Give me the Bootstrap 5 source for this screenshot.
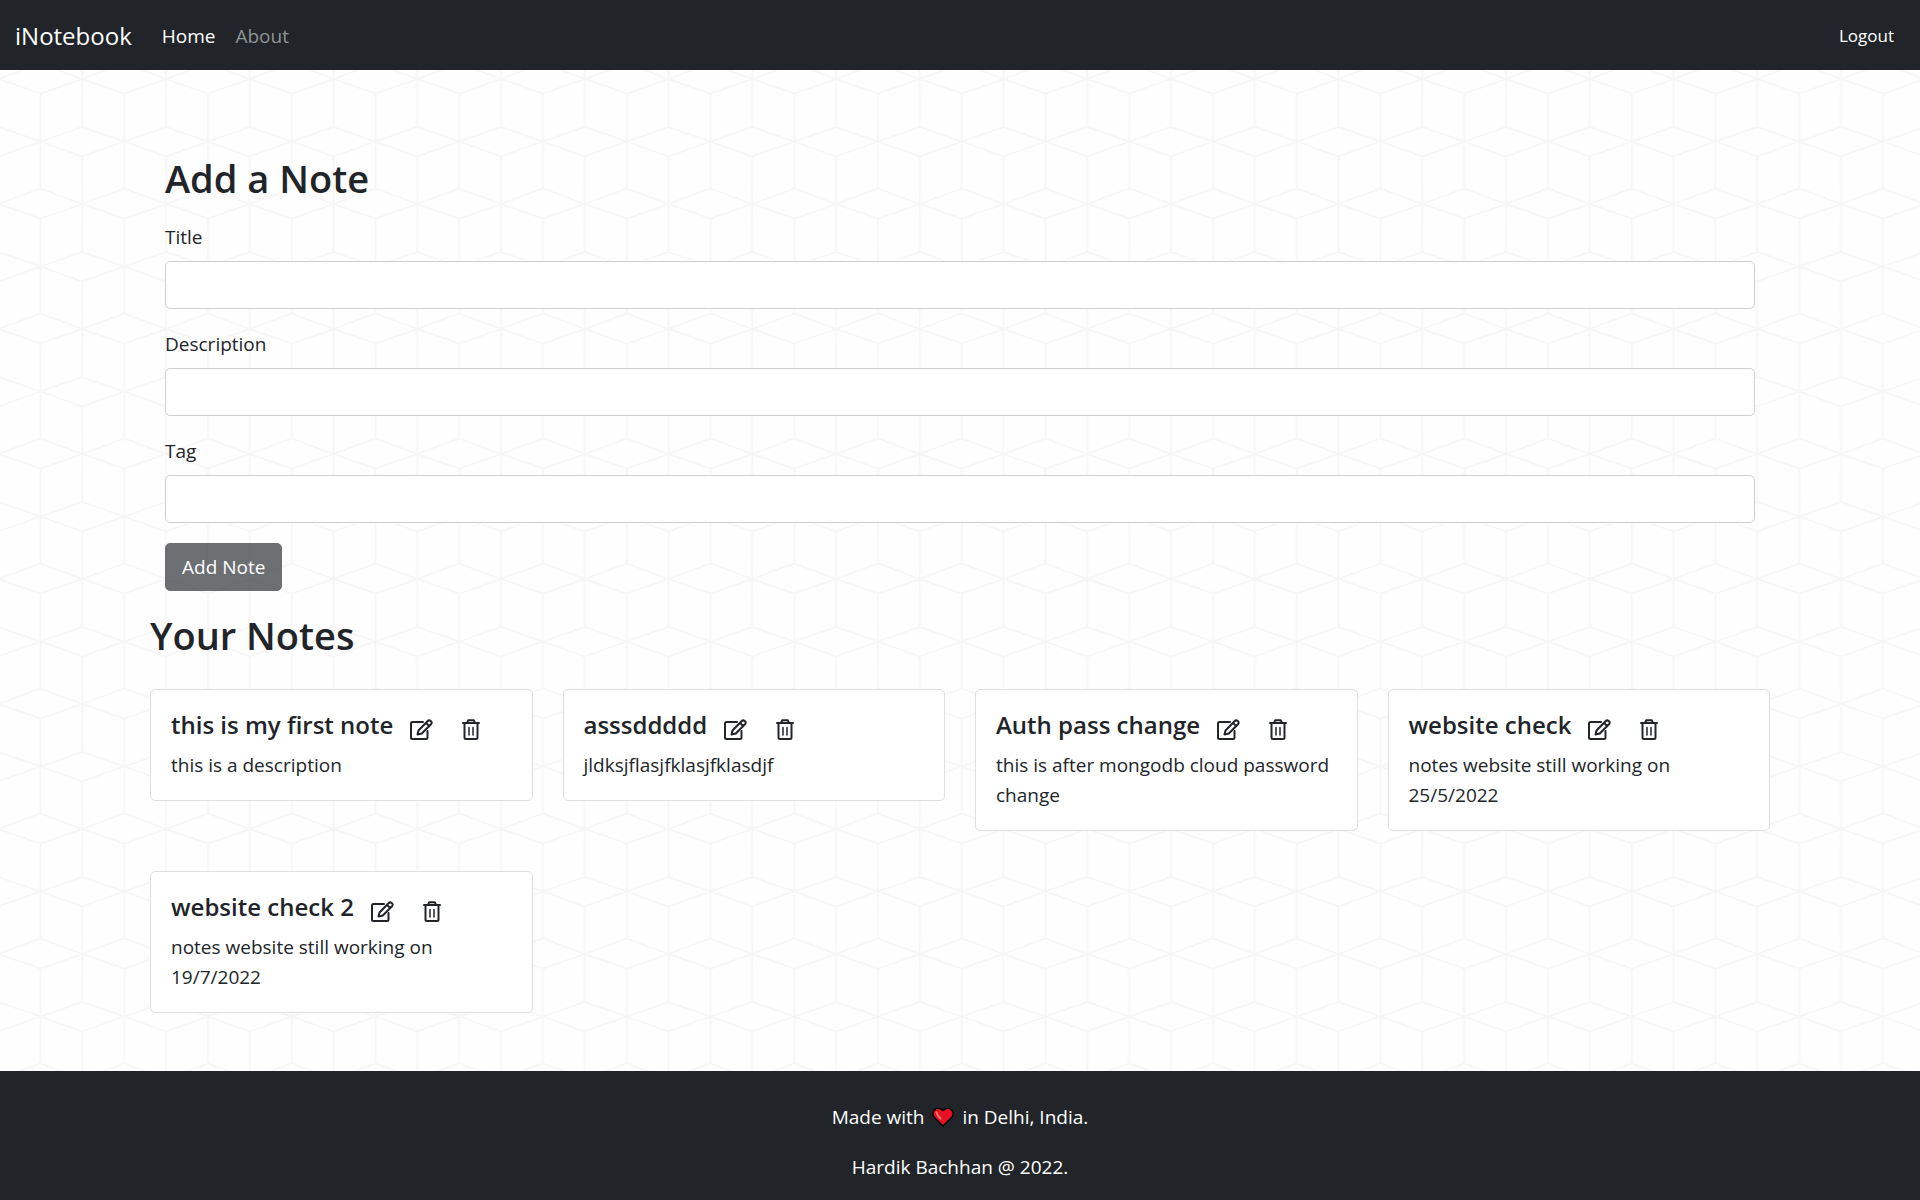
<!DOCTYPE html>
<html lang="en">
<head>
<meta charset="utf-8">
<meta name="viewport" content="width=device-width, initial-scale=1">
<title>iNotebook</title>
<link href="https://cdn.jsdelivr.net/npm/bootstrap@5.3.0/dist/css/bootstrap.min.css" rel="stylesheet">
<style>
  html { font-size: 20px; }
  body {
    --bs-border-radius: 5px;
    font-family: "Open Sans", "Noto Sans", sans-serif;
    font-size: 19px;
    line-height: 30px;
    color: #212529;
    background-color: #fefefe;
    background-size: 335px 125px;
    background-image: url("data:image/svg+xml,%3Csvg xmlns='http://www.w3.org/2000/svg' width='335' height='125'%3E%3Cdefs%3E%3Cpattern id='c' width='83.75' height='125' patternUnits='userSpaceOnUse'%3E%3Cpath d='M-1.5 79L40.5 63.5L82.3 79L40.5 93.5ZM82.3 79L124 63.5M82.3 79L124 93.5M40.5 141.5L82.3 127M40.5 141.5L-1.5 127M40.5 16.5L82.3 31.5L124 16.5M40.5 16.5L82.3 2L124 16.5M40.5 16.5L-1.5 31.5M40.5 16.5L-1.5 2M40.5 -31V63.5M40.5 93.5V130M82.3 31.5V125M82.3 0V2' fill='none' stroke='%23f6f6f6' stroke-width='1.7'/%3E%3C/pattern%3E%3C/defs%3E%3Crect width='335' height='125' fill='url(%23c)'/%3E%3C/svg%3E");
  }
  .site-nav { min-height: 70px; padding: 2px 0 0; }
  .site-nav .navbar-brand, .card-title { font-size: 24px; }
  .site-nav .nav-link.active { color: #fff; }
  .site-nav .nav-link { color: #8f9294; }
  .btn-logout { font-size: 17px; color: #fff; }
  .page-wrap { max-width: 1650px; }
  .page-title { font-size: 38px; line-height: 48px; font-weight: 600; margin-bottom: 20px; }
  .add-note { padding: 84px 15px 0; }
  .form-control { height: 48px; font-size: 19px; border-color: #ced0d2; border-radius: 5px; background: #fff; }
  .form-label { line-height: 30px; margin-bottom: 9px; }
  .btn-add { height: 48px; padding: 0 16px; font-size: 19px; border-radius: 5px; }
  .btn-add:disabled { color: #fff; background: #212529; border-color: #212529; opacity: .65; }
  .card { border-radius: 5px; border-color: #dfdfdf; background: #fff; }
  .card-title { line-height: 30px; font-weight: 600; margin: 0 17px 0 0; }
  .icon-btn { display: block; margin-top: 8px; padding: 0; border: 0; background: none; color: #212529; line-height: 0; }
  .note-del { margin-left: 29px; }
  .icon-btn svg { fill: none; stroke: currentColor; stroke-width: 2; stroke-linejoin: round; stroke-linecap: round; }
  .site-footer { padding: 31px 0 18px; }
  .heart { width: 22px; height: 20px; margin: 0 3px; vertical-align: -3px; }
</style>
</head>
<body class="d-flex flex-column min-vh-100">
<svg class="d-none" aria-hidden="true">
  <symbol id="edit" viewBox="0 0 23 21"><path d="M13 3H2.500Q1 3 1 4.500V18.500Q1 20 2.500 20H16Q17.500 20 17.500 18.500V12"/><path d="M7.500 15.500L8.500 11.500L17.500 2.200Q19 .6 20.700 2Q22.600 3.500 21 5.200L11.800 14.500Z M16 4L19.200 7"/></symbol>
  <symbol id="bin" viewBox="0 0 18 21"><path d="M1 4H17M5 4L6.200 1.200H11.800L13 4M2.500 4V18.500Q2.500 20 4 20H14Q15.500 20 15.500 18.500V4"/><path d="M7 8.500V16M11 8.500V16" stroke-width="1.500"/></symbol>
</svg>

<nav class="navbar navbar-expand-lg navbar-dark bg-dark site-nav">
  <div class="container-fluid">
    <a class="navbar-brand" href="#">iNotebook</a>
    <ul class="navbar-nav me-auto">
      <li class="nav-item"><a class="nav-link active" aria-current="page" href="#">Home</a></li>
      <li class="nav-item"><a class="nav-link" href="#">About</a></li>
    </ul>
    <button type="button" class="btn btn-sm btn-logout">Logout</button>
  </div>
</nav>

<main class="container-fluid page-wrap mb-auto">
  <section class="add-note">
    <h2 class="page-title">Add a Note</h2>
    <form>
      <div class="mb-3"><label class="form-label" for="title">Title</label><input class="form-control" id="title" type="text"></div>
      <div class="mb-3"><label class="form-label" for="description">Description</label><input class="form-control" id="description" type="text"></div>
      <div class="mb-3"><label class="form-label" for="tag">Tag</label><input class="form-control" id="tag" type="text"></div>
      <button class="btn btn-add" type="submit" disabled>Add Note</button>
    </form>
  </section>

  <section class="pt-3">
    <h2 class="page-title">Your Notes</h2>
    <div class="row align-items-start pt-2">
      <div class="col-md-3 mb-4"><article class="card mb-2"><div class="card-body">
        <div class="d-flex align-items-center mb-2"><h5 class="card-title">this is my first note</h5>
          <button class="icon-btn" aria-label="Edit"><svg width="23" height="21"><use href="#edit"/></svg></button>
          <button class="icon-btn note-del" aria-label="Delete"><svg width="18" height="21"><use href="#bin"/></svg></button></div>
        <p class="card-text">this is a description</p></div></article></div>
      <div class="col-md-3 mb-4"><article class="card mb-2"><div class="card-body">
        <div class="d-flex align-items-center mb-2"><h5 class="card-title">asssddddd</h5>
          <button class="icon-btn" aria-label="Edit"><svg width="23" height="21"><use href="#edit"/></svg></button>
          <button class="icon-btn note-del" aria-label="Delete"><svg width="18" height="21"><use href="#bin"/></svg></button></div>
        <p class="card-text">jldksjflasjfklasjfklasdjf</p></div></article></div>
      <div class="col-md-3 mb-4"><article class="card mb-2"><div class="card-body">
        <div class="d-flex align-items-center mb-2"><h5 class="card-title">Auth pass change</h5>
          <button class="icon-btn" aria-label="Edit"><svg width="23" height="21"><use href="#edit"/></svg></button>
          <button class="icon-btn note-del" aria-label="Delete"><svg width="18" height="21"><use href="#bin"/></svg></button></div>
        <p class="card-text">this is after mongodb cloud password change</p></div></article></div>
      <div class="col-md-3 mb-4"><article class="card mb-2"><div class="card-body">
        <div class="d-flex align-items-center mb-2"><h5 class="card-title">website check</h5>
          <button class="icon-btn" aria-label="Edit"><svg width="23" height="21"><use href="#edit"/></svg></button>
          <button class="icon-btn note-del" aria-label="Delete"><svg width="18" height="21"><use href="#bin"/></svg></button></div>
        <p class="card-text">notes website still working on 25/5/2022</p></div></article></div>
      <div class="col-md-3 mb-4"><article class="card mb-2"><div class="card-body">
        <div class="d-flex align-items-center mb-2"><h5 class="card-title">website check 2</h5>
          <button class="icon-btn" aria-label="Edit"><svg width="23" height="21"><use href="#edit"/></svg></button>
          <button class="icon-btn note-del" aria-label="Delete"><svg width="18" height="21"><use href="#bin"/></svg></button></div>
        <p class="card-text">notes website still working on 19/7/2022</p></div></article></div>
    </div>
  </section>
</main>

<footer class="bg-dark text-white text-center site-footer">
  <p>Made with <svg class="heart" viewBox="0 0 22 20" role="img" aria-label="love"><path d="M11 19L2.500 10.500C-2 5 4-2 11 3.500C18-2 24 5 19.500 10.500Z" fill="#e81224" stroke="#000" stroke-width="1.500" stroke-linejoin="round"/><path d="M4.500 5.500Q5.500 9 8.500 11.500" fill="none" stroke="#f4776f" stroke-width="2" stroke-linecap="round"/></svg> in Delhi, India.</p>
  <p class="mb-0">Hardik Bachhan @ 2022.</p>
</footer>
<script src="https://cdn.jsdelivr.net/npm/bootstrap@5.3.0/dist/js/bootstrap.bundle.min.js"></script>
</body>
</html>
